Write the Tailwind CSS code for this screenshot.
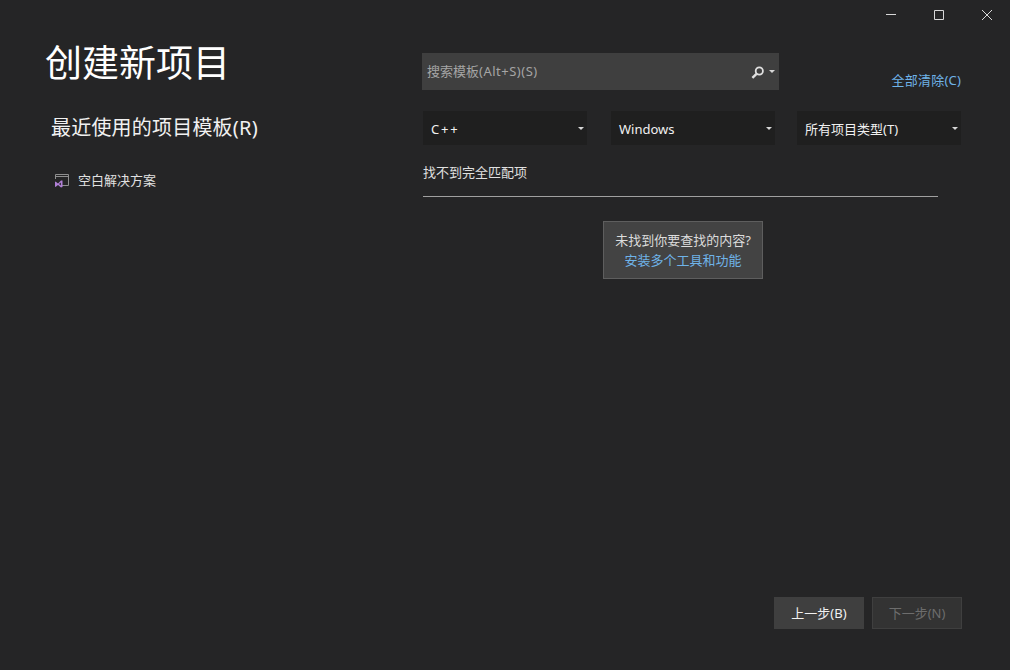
<!DOCTYPE html>
<html lang="zh-CN">
<head>
  <meta charset="UTF-8">
  <title>创建新项目</title>
  <script src="https://cdn.jsdelivr.net/npm/@tailwindcss/browser@4"></script>
</head>
<body class="w-[1010px] h-[670px] overflow-hidden bg-[#252526] text-[#f1f1f1] font-['Noto_Sans','Noto_Sans_CJK_SC',sans-serif] text-[13px]">
  <div class="flex flex-col h-[670px]">
    <!-- window buttons -->
    <div class="flex justify-end h-[30px] shrink-0">
      <button class="w-[48px] h-[30px] flex items-center justify-center">
        <svg width="10" height="10" viewBox="0 0 10 10"><path d="M0 4.5H10" stroke="#d8d8d8" fill="none"/></svg>
      </button>
      <button class="w-[48px] h-[30px] mr-[1px] flex items-center justify-center">
        <svg width="10" height="10" viewBox="0 0 10 10"><path d="M.5.5H9.5V9.5H.5Z" stroke="#d8d8d8" fill="none"/></svg>
      </button>
      <button class="w-[46px] h-[30px] flex items-center justify-center">
        <svg width="10" height="10" viewBox="0 0 10 10"><path d="M0 0L10 10M10 0L0 10" stroke="#d8d8d8" fill="none"/></svg>
      </button>
    </div>

    <div class="flex flex-1">
      <!-- left column -->
      <div class="w-[422px] shrink-0 pl-[45px]">
        <h1 class="text-[37px] leading-[44px] mt-[11px] text-white">创建新项目</h1>
        <h2 class="text-[20px] leading-[28px] mt-[29px] ml-[6px] tracking-[0.2px] text-[#f1f1f1]">最近使用的项目模板(R)</h2>
        <div class="flex items-center gap-[8px] ml-[9px] mt-[29px] h-[20px] text-[#e0e0e0]">
          <svg width="16" height="16" viewBox="0 0 16 16">
            <path d="M1.5 6V1.5H14.5V12.5H8" stroke="#8f8f8f" fill="none"/>
            <path d="M2 3.5H14" stroke="#8f8f8f" fill="none"/>
            <path d="M1.5 8.5L4 10.5L7 7.5H8.5V14L7 14.5L4 12L1.5 14L1 13.5V9Z" fill="#b180d7"/>
            <path d="M6.8 9.5V12.5L5 11Z" fill="#252526"/>
          </svg>
          <span>空白解决方案</span>
        </div>
      </div>

      <!-- right column -->
      <div class="flex-1 pr-[49px]">
        <div class="flex items-end">
          <div class="w-[357px] h-[37px] mt-[23px] bg-[#3f3f3f] flex items-center pl-[5px] pr-[4px] text-[#a5a5a5]">
            <span class="flex-1">搜索模板<span class="tracking-[0.5px]">(Alt+S)(S)</span></span>
            <svg width="14" height="14" viewBox="0 0 14 14" class="mr-[4px]">
              <circle cx="8.3" cy="6" r="3.6" stroke="#e0e0e0" stroke-width="1.8" fill="none"/>
              <path d="M5.5 8.8L1.4 12.9" stroke="#e0e0e0" stroke-width="2.4" fill="none"/>
            </svg>
            <svg width="6" height="3" viewBox="0 0 6 3"><path d="M0 0H6L3 3Z" fill="#d8d8d8"/></svg>
          </div>
          <a class="ml-auto mb-[1px] leading-[18px] tracking-[0.2px] text-[#6fb3e8]">全部清除(C)</a>
        </div>

        <div class="flex ml-[1px] mt-[21px] gap-[24px]">
          <div class="w-[164px] h-[34px] bg-[#1f1f1f] flex items-center justify-between pl-[8px] pr-[3px]">
            <span class="pt-[3px] tracking-[1.8px]">C++</span>
            <svg width="6" height="3" viewBox="0 0 6 3"><path d="M0 0H6L3 3Z" fill="#d8d8d8"/></svg>
          </div>
          <div class="w-[164px] h-[34px] bg-[#1f1f1f] flex items-center justify-between pl-[8px] pr-[3px]">
            <span class="pt-[3px]">Windows</span>
            <svg width="6" height="3" viewBox="0 0 6 3"><path d="M0 0H6L3 3Z" fill="#d8d8d8"/></svg>
          </div>
          <div class="w-[164px] h-[34px] -ml-[2px] bg-[#1f1f1f] flex items-center justify-between pl-[8px] pr-[3px]">
            <span class="pt-[3px]">所有项目类型(T)</span>
            <svg width="6" height="3" viewBox="0 0 6 3"><path d="M0 0H6L3 3Z" fill="#d8d8d8"/></svg>
          </div>
        </div>

        <div class="ml-[1px] w-[515px] mt-[18px] pb-[14px] leading-[19px] border-b border-[#a0a0a0] text-[#e0e0e0]">找不到完全匹配项</div>

        <div class="ml-[181px] mt-[24px] w-[160px] h-[58px] bg-[#434343] border border-[#5e5e5e] flex flex-col items-center justify-center leading-[19px]">
          <span class="text-[#dcdcdc]">未找到你要查找的内容?</span>
          <a class="mt-[1px] text-[#6fb3e8]">安装多个工具和功能</a>
        </div>
      </div>
    </div>

    <!-- footer buttons -->
    <div class="flex justify-end gap-[8px] pr-[48px] pb-[41px]">
      <button class="w-[90px] h-[32px] pt-[1px] bg-[#3f3f3f] text-[#f1f1f1]">上一步(B)</button>
      <button class="w-[90px] h-[32px] pt-[1px] bg-[#333333] border border-[#3f3f3f] text-[#6d6d6d]">下一步(N)</button>
    </div>
  </div>
</body>
</html>
